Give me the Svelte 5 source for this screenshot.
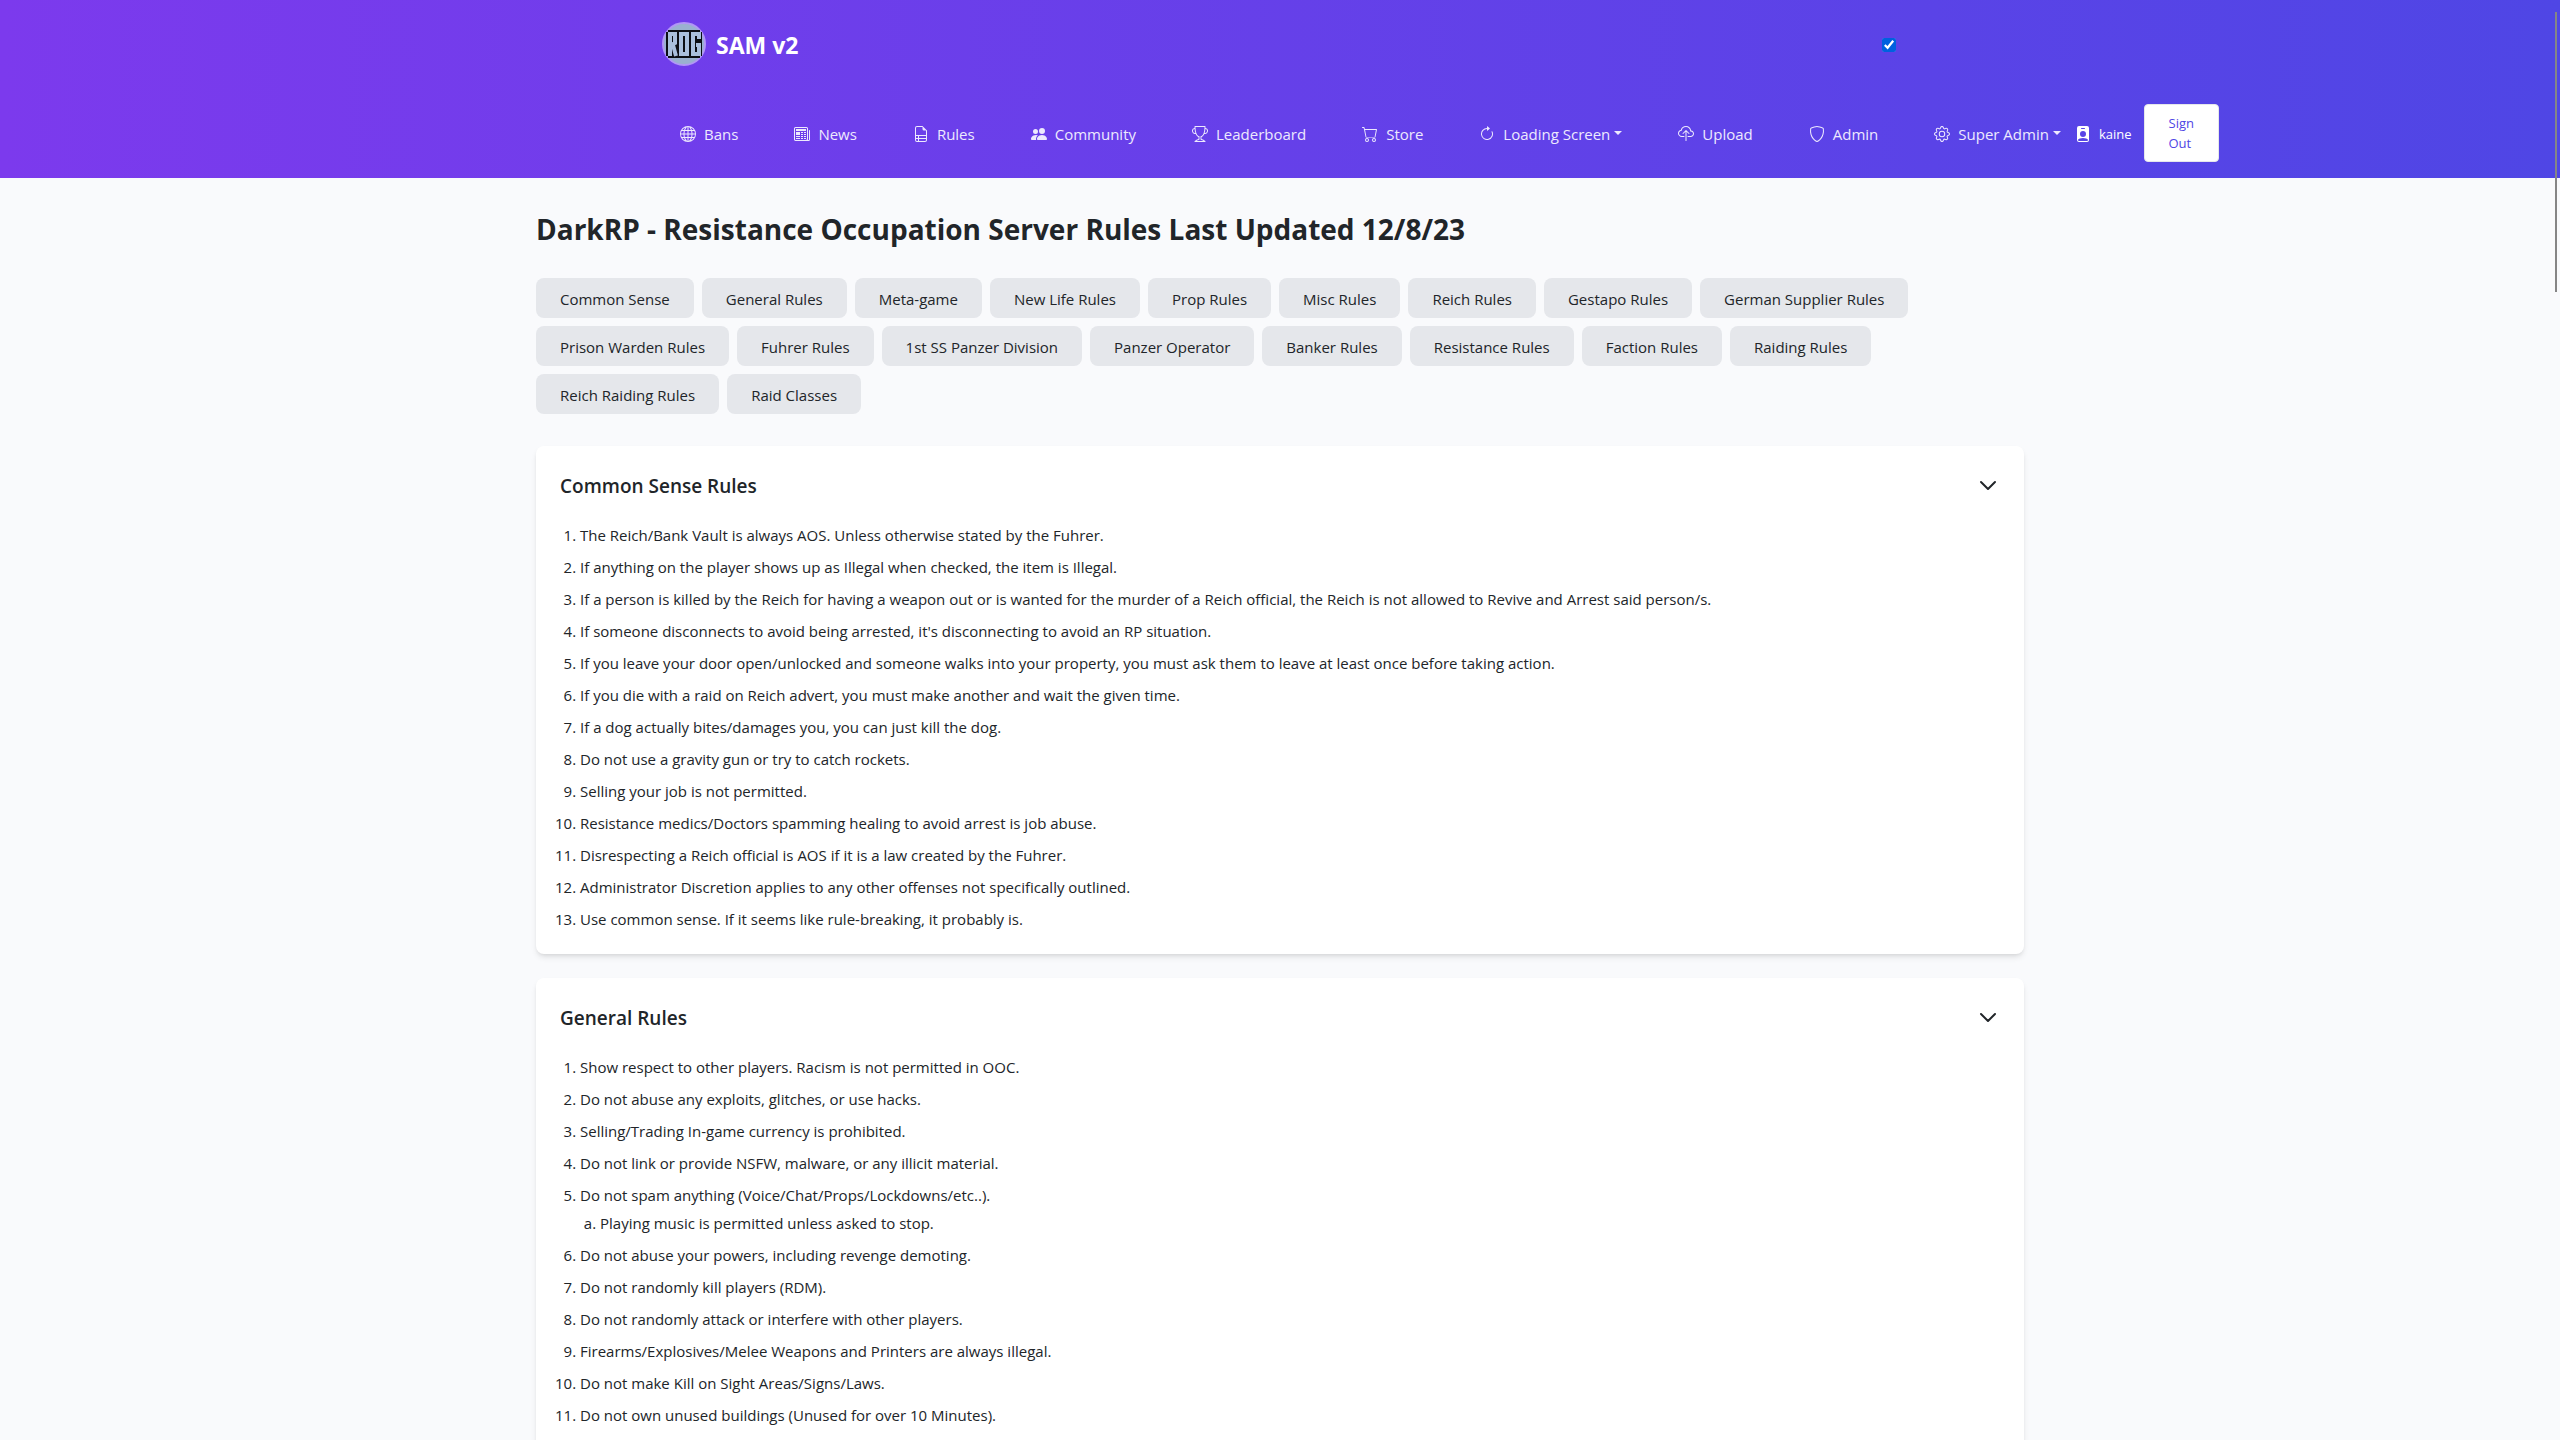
<script>
  let darkMode = $state(true);
  let open = $state([true, true]);

  const nav = [
    { label: 'Bans', icon: 'globe' },
    { label: 'News', icon: 'newspaper' },
    { label: 'Rules', icon: 'sheet' },
    { label: 'Community', icon: 'people' },
    { label: 'Leaderboard', icon: 'trophy' },
    { label: 'Store', icon: 'cart' },
    { label: 'Loading Screen', icon: 'arrow', menu: true },
    { label: 'Upload', icon: 'cloud' },
    { label: 'Admin', icon: 'shield' },
    { label: 'Super Admin', icon: 'gear', menu: true }
  ];

  const icons = {
    globe: ['M0 8a8 8 0 1 1 16 0A8 8 0 0 1 0 8zm7.5-6.923c-.67.204-1.335.82-1.887 1.855A7.97 7.97 0 0 0 5.145 4H7.5V1.077zM4.09 4a9.267 9.267 0 0 1 .64-1.539 6.7 6.7 0 0 1 .597-.933A7.025 7.025 0 0 0 2.255 4H4.09zm-.582 3.5c.03-.877.138-1.718.312-2.5H1.674a6.958 6.958 0 0 0-.656 2.5h2.49zM4.847 5a12.5 12.5 0 0 0-.338 2.5H7.5V5H4.847zM8.5 5v2.5h2.99a12.495 12.495 0 0 0-.337-2.5H8.5zM4.51 8.5a12.5 12.5 0 0 0 .337 2.5H7.5V8.5H4.51zm3.99 0V11h2.653c.187-.765.306-1.608.338-2.5H8.5zM5.145 12c.138.386.295.744.468 1.068.552 1.035 1.218 1.65 1.887 1.855V12H5.145zm.182 2.472a6.696 6.696 0 0 1-.597-.933A9.268 9.268 0 0 1 4.09 12H2.255a7.024 7.024 0 0 0 3.072 2.472zM3.82 11a13.652 13.652 0 0 1-.312-2.5h-2.49c.062.89.291 1.733.656 2.5H3.82zm6.853 3.472A7.024 7.024 0 0 0 13.745 12H11.91a9.27 9.27 0 0 1-.64 1.539 6.688 6.688 0 0 1-.597.933zM8.5 12v2.923c.67-.204 1.335-.82 1.887-1.855.173-.324.33-.682.468-1.068H8.5zm3.68-1h2.146c.365-.767.594-1.61.656-2.5h-2.49a13.65 13.65 0 0 1-.312 2.5zm2.802-3.5a6.959 6.959 0 0 0-.656-2.5H12.18c.174.782.282 1.623.312 2.5h2.49zM11.27 2.461c.247.464.462.98.64 1.539h1.835a7.024 7.024 0 0 0-3.072-2.472c.218.284.418.598.597.933zM10.855 4a7.966 7.966 0 0 0-.468-1.068C9.835 1.897 9.17 1.282 8.5 1.077V4h2.355z'],
    newspaper: ['M0 2.5A1.5 1.5 0 0 1 1.5 1h11A1.5 1.5 0 0 1 14 2.5v10.528c0 .3-.05.654-.238.972h.738a.5.5 0 0 0 .5-.5v-9a.5.5 0 0 1 1 0v9a1.5 1.5 0 0 1-1.5 1.5H1.497A1.497 1.497 0 0 1 0 13.5v-11zM12 14c.37 0 .654-.211.853-.441.092-.106.147-.279.147-.531V2.5a.5.5 0 0 0-.5-.5h-11a.5.5 0 0 0-.5.5v11c0 .278.223.5.497.5H12z', 'M2 3h10v2H2V3zm0 3h4v3H2V6zm0 4h4v1H2v-1zm0 2h4v1H2v-1zm5-6h2v1H7V6zm3 0h2v1h-2V6zM7 8h2v1H7V8zm3 0h2v1h-2V8zm-3 2h2v1H7v-1zm3 0h2v1h-2v-1zm-3 2h2v1H7v-1zm3 0h2v1h-2v-1z'],
    sheet: ['M14 14V4.5L9.5 0H4a2 2 0 0 0-2 2v12a2 2 0 0 0 2 2h8a2 2 0 0 0 2-2zM9.5 3A1.500 1.500 0 0 0 11 4.500h2V9H3V2a1 1 0 0 1 1-1h5.500v2zM3 12v-2h2v2H3zm0 1h2v2H4a1 1 0 0 1-1-1v-1zm3 2v-2h7v1a1 1 0 0 1-1 1H6zm7-3H6v-2h7v2z'],
    people: ['M7 14s-1 0-1-1 1-4 5-4 5 3 5 4-1 1-1 1H7zm4-6a3 3 0 1 0 0-6 3 3 0 0 0 0 6zm-5.784 6A2.238 2.238 0 0 1 5 13c0-1.355.68-2.750 1.936-3.720A6.325 6.325 0 0 0 5 9c-4 0-5 3-5 4s1 1 1 1h4.216zM4.500 8a2.500 2.500 0 1 0 0-5 2.500 2.500 0 0 0 0 5z'],
    trophy: ['M2.500.5A.5.5 0 0 1 3 0h10a.5.5 0 0 1 .5.5c0 .538-.012 1.050-.034 1.536a3 3 0 1 1-1.133 5.890c-.790 1.865-1.878 2.777-2.833 3.011v2.173l1.425.356c.194.048.377.135.537.255L13.300 15.100a.5.5 0 0 1-.3.900H3a.5.5 0 0 1-.3-.900l1.838-1.379c.160-.120.343-.207.537-.255L6.500 13.110v-2.173c-.955-.234-2.043-1.146-2.833-3.012a3 3 0 1 1-1.132-5.890A33.076 33.076 0 0 1 2.500.5zm.099 2.540a2 2 0 0 0 .720 3.935c-.333-1.050-.588-2.346-.720-3.935zm10.083 3.935a2 2 0 0 0 .720-3.935c-.133 1.590-.388 2.885-.720 3.935zM3.504 1c.007.517.026 1.006.056 1.469.130 2.028.457 3.546.870 4.667C5.294 9.480 6.484 10 7 10a.5.5 0 0 1 .5.5v2.610a1 1 0 0 1-.757.970l-1.426.356a.5.5 0 0 0-.179.085L4.500 15h7l-.638-.479a.501.501 0 0 0-.180-.085l-1.425-.356a1 1 0 0 1-.757-.970V10.500A.5.5 0 0 1 9 10c.516 0 1.706-.520 2.570-2.864.413-1.120.740-2.640.870-4.667.030-.463.049-.952.056-1.469H3.504z'],
    cart: ['M0 1.500A.5.5 0 0 1 .5 1H2a.5.5 0 0 1 .485.379L2.890 3H14.500a.5.5 0 0 1 .490.598l-1.500 7.500A.5.5 0 0 1 13 11.500H4a.5.5 0 0 1-.491-.408L2.010 3.607 1.610 2H.5a.5.5 0 0 1-.5-.5zM3.102 4l1.313 7h8.170l1.313-7H3.102zM5 12a2 2 0 1 0 0 4 2 2 0 0 0 0-4zm7 0a2 2 0 1 0 0 4 2 2 0 0 0 0-4zm-7 1a1 1 0 1 1 0 2 1 1 0 0 1 0-2zm7 0a1 1 0 1 1 0 2 1 1 0 0 1 0-2z'],
    arrow: ['M8 3a5 5 0 1 0 4.546 2.914.5.5 0 0 1 .908-.417A6 6 0 1 1 8 2v1z', 'M8 4.466V.534a.250.250 0 0 1 .410-.192l2.360 1.966c.120.100.120.284 0 .384L8.410 4.658A.250.250 0 0 1 8 4.466z'],
    cloud: ['M4.406 1.342A5.530 5.530 0 0 1 8 0c2.690 0 4.923 2 5.166 4.579C14.758 4.804 16 6.137 16 7.773 16 9.569 14.502 11 12.687 11H10a.5.5 0 0 1 0-1h2.688C13.979 10 15 8.988 15 7.773c0-1.216-1.020-2.228-2.313-2.228h-.5v-.5C12.188 2.825 10.328 1 8 1a4.530 4.530 0 0 0-2.941 1.100c-.757.652-1.153 1.438-1.153 2.055v.448l-.445.049C2.064 4.805 1 5.952 1 7.318 1 8.785 2.230 10 3.781 10H6a.5.5 0 0 1 0 1H3.781C1.708 11 0 9.366 0 7.318c0-1.763 1.266-3.223 2.942-3.593.143-.863.698-1.723 1.464-2.383z', 'M7.646 4.146a.5.5 0 0 1 .708 0l3 3a.5.5 0 0 1-.708.708L8.500 5.707V14.500a.5.5 0 0 1-1 0V5.707L5.354 7.854a.5.5 0 1 1-.708-.708l3-3z'],
    shield: ['M5.338 1.590a61.440 61.440 0 0 0-2.837.856.481.481 0 0 0-.328.390c-.554 4.157.726 7.190 2.253 9.188a10.725 10.725 0 0 0 2.287 2.233c.346.244.652.420.893.533.120.057.218.095.293.118a.550.550 0 0 0 .101.025.615.615 0 0 0 .100-.025c.076-.023.174-.061.294-.118.240-.113.547-.290.893-.533a10.726 10.726 0 0 0 2.287-2.233c1.527-1.997 2.807-5.031 2.253-9.188a.480.480 0 0 0-.328-.390c-.651-.213-1.750-.560-2.837-.855C9.552 1.290 8.531 1.067 8 1.067c-.530 0-1.552.223-2.662.524zM5.072.560C6.157.265 7.310 0 8 0s1.843.265 2.928.560c1.110.300 2.229.655 2.887.870a1.540 1.540 0 0 1 1.044 1.262c.596 4.477-.787 7.795-2.465 9.990a11.775 11.775 0 0 1-2.517 2.453 7.159 7.159 0 0 1-1.048.625c-.280.132-.581.240-.829.240s-.548-.108-.829-.240a7.158 7.158 0 0 1-1.048-.625 11.777 11.777 0 0 1-2.517-2.453C1.928 10.487.545 7.169 1.141 2.692A1.540 1.540 0 0 1 2.185 1.430 62.456 62.456 0 0 1 5.072.560z'],
    gear: ['M8 4.754a3.246 3.246 0 1 0 0 6.492 3.246 3.246 0 0 0 0-6.492zM5.754 8a2.246 2.246 0 1 1 4.492 0 2.246 2.246 0 0 1-4.492 0z', 'M9.796 1.343c-.527-1.790-3.065-1.790-3.592 0l-.094.319a.873.873 0 0 1-1.255.520l-.292-.160c-1.640-.892-3.433.902-2.540 2.541l.159.292a.873.873 0 0 1-.520 1.255l-.319.094c-1.790.527-1.790 3.065 0 3.592l.319.094a.873.873 0 0 1 .520 1.255l-.160.292c-.892 1.640.901 3.434 2.541 2.540l.292-.159a.873.873 0 0 1 1.255.520l.094.319c.527 1.790 3.065 1.790 3.592 0l.094-.319a.873.873 0 0 1 1.255-.520l.292.160c1.640.893 3.434-.902 2.540-2.541l-.159-.292a.873.873 0 0 1 .520-1.255l.319-.094c1.790-.527 1.790-3.065 0-3.592l-.319-.094a.873.873 0 0 1-.520-1.255l.160-.292c.893-1.640-.902-3.433-2.541-2.540l-.292.159a.873.873 0 0 1-1.255-.520l-.094-.319zm-2.633.283c.246-.835 1.428-.835 1.674 0l.094.319a1.873 1.873 0 0 0 2.693 1.115l.291-.160c.764-.415 1.600.420 1.184 1.185l-.159.292a1.873 1.873 0 0 0 1.116 2.692l.318.094c.835.246.835 1.428 0 1.674l-.319.094a1.873 1.873 0 0 0-1.115 2.693l.160.291c.415.764-.420 1.600-1.185 1.184l-.291-.159a1.873 1.873 0 0 0-2.693 1.116l-.094.318c-.246.835-1.428.835-1.674 0l-.094-.319a1.873 1.873 0 0 0-2.692-1.115l-.292.160c-.764.415-1.600-.420-1.184-1.185l.159-.291A1.873 1.873 0 0 0 1.945 8.930l-.319-.094c-.835-.246-.835-1.428 0-1.674l.319-.094A1.873 1.873 0 0 0 3.060 4.377l-.160-.292c-.415-.764.420-1.600 1.185-1.184l.292.159a1.873 1.873 0 0 0 2.692-1.115l.094-.319z'],
    badge: ['M2 2a2 2 0 0 1 2-2h8a2 2 0 0 1 2 2v12a2 2 0 0 1-2 2H4a2 2 0 0 1-2-2V2zm4.500 0a.5.5 0 0 0 0 1h3a.5.5 0 0 0 0-1h-3zM8 11a3 3 0 1 0 0-6 3 3 0 0 0 0 6zm5 2.755C12.146 12.825 10.623 12 8 12s-4.146.826-5 1.755V14a1 1 0 0 0 1 1h8a1 1 0 0 0 1-1v-.245z']
  };

  const pills = [
    'Common Sense', 'General Rules', 'Meta-game', 'New Life Rules', 'Prop Rules', 'Misc Rules',
    'Reich Rules', 'Gestapo Rules', 'German Supplier Rules', 'Prison Warden Rules', 'Fuhrer Rules',
    '1st SS Panzer Division', 'Panzer Operator', 'Banker Rules', 'Resistance Rules', 'Faction Rules',
    'Raiding Rules', 'Reich Raiding Rules', 'Raid Classes'
  ];

  const sections = [
    {
      title: 'Common Sense Rules',
      rules: [
        { text: 'The Reich/Bank Vault is always AOS. Unless otherwise stated by the Fuhrer.' },
        { text: 'If anything on the player shows up as Illegal when checked, the item is Illegal.' },
        { text: 'If a person is killed by the Reich for having a weapon out or is wanted for the murder of a Reich official, the Reich is not allowed to Revive and Arrest said person/s.' },
        { text: "If someone disconnects to avoid being arrested, it's disconnecting to avoid an RP situation." },
        { text: 'If you leave your door open/unlocked and someone walks into your property, you must ask them to leave at least once before taking action.' },
        { text: 'If you die with a raid on Reich advert, you must make another and wait the given time.' },
        { text: 'If a dog actually bites/damages you, you can just kill the dog.' },
        { text: 'Do not use a gravity gun or try to catch rockets.' },
        { text: 'Selling your job is not permitted.' },
        { text: 'Resistance medics/Doctors spamming healing to avoid arrest is job abuse.' },
        { text: 'Disrespecting a Reich official is AOS if it is a law created by the Fuhrer.' },
        { text: 'Administrator Discretion applies to any other offenses not specifically outlined.' },
        { text: 'Use common sense. If it seems like rule-breaking, it probably is.' }
      ]
    },
    {
      title: 'General Rules',
      rules: [
        { text: 'Show respect to other players. Racism is not permitted in OOC.' },
        { text: 'Do not abuse any exploits, glitches, or use hacks.' },
        { text: 'Selling/Trading In-game currency is prohibited.' },
        { text: 'Do not link or provide NSFW, malware, or any illicit material.' },
        { text: 'Do not spam anything (Voice/Chat/Props/Lockdowns/etc..).', sub: ['Playing music is permitted unless asked to stop.'] },
        { text: 'Do not abuse your powers, including revenge demoting.' },
        { text: 'Do not randomly kill players (RDM).' },
        { text: 'Do not randomly attack or interfere with other players.' },
        { text: 'Firearms/Explosives/Melee Weapons and Printers are always illegal.' },
        { text: 'Do not make Kill on Sight Areas/Signs/Laws.' },
        { text: 'Do not own unused buildings (Unused for over 10 Minutes).' }
      ]
    }
  ];
</script>

{#snippet icon(name)}
  <svg class="icon" viewBox="0 0 16 16" aria-hidden="true">
    {#each icons[name] as d}<path {d} />{/each}
  </svg>
{/snippet}

<div class="page">
  <header>
    <div class="top">
      <a class="brand" href="#home">
        <svg class="logo" viewBox="0 0 44 44" aria-hidden="true">
          <circle cx="22" cy="22" r="21" fill="#9ab1cf" stroke="#b197f5" stroke-width="2" />
          <path d="M6 8H38V10H40V34H38V36H6V34H4V10H6Z" fill="#0b0e14" />
          <g fill="none" stroke="#a9bfdc" stroke-width="4">
            <path d="M8 34V12H13V21L9 23M11 23L14 34" />
            <rect x="19" y="12" width="6" height="20" />
            <path d="M37 17V12H31V32H37V23H34" />
          </g>
        </svg>
        <span>SAM v2</span>
      </a>
      <input type="checkbox" aria-label="Theme" bind:checked={darkMode} />
    </div>
    <div class="bar">
      <nav>
        {#each nav as item}
          <a href="#nav" class:menu={item.menu}>{@render icon(item.icon)}<span>{item.label}</span></a>
        {/each}
      </nav>
      <div class="account">
        <a class="user" href="#profile">{@render icon('badge')}<span>kaine</span></a>
        <button class="signout" type="button">Sign<br />Out</button>
      </div>
    </div>
  </header>

  <main>
    <h1>DarkRP - Resistance Occupation Server Rules Last Updated 12/8/23</h1>
    <div class="pills">
      {#each pills as pill}<a href="#rules">{pill}</a>{/each}
    </div>
    {#each sections as section, i}
      <section>
        <button class="heading" type="button" aria-expanded={open[i]} onclick={() => (open[i] = !open[i])}>
          <span>{section.title}</span>
          <svg class="chevron" viewBox="0 0 24 24" aria-hidden="true"><path d="M19 9l-7 7-7-7" /></svg>
        </button>
        {#if open[i]}
          <ol>
            {#each section.rules as rule}
              <li>
                {rule.text}
                {#if rule.sub}
                  <ol class="sub">{#each rule.sub as s}<li>{s}</li>{/each}</ol>
                {/if}
              </li>
            {/each}
          </ol>
        {/if}
      </section>
    {/each}
  </main>
  <div class="scrollbar" aria-hidden="true"></div>
</div>

<style>
  :global(body) {
    margin: 0;
    background: #f9fafc;
  }
  .page {
    height: 100vh;
    overflow: hidden;
    font: 15px/24px 'Segoe UI', 'Open Sans', 'Noto Sans', sans-serif;
    color: #212529;
  }
  a {
    color: inherit;
    text-decoration: none;
  }
  button {
    font: inherit;
    color: inherit;
    border: 0;
    cursor: pointer;
  }
  header {
    background: linear-gradient(to right, #7c3aed, #4f46e5);
    color: #fff;
  }
  .top,
  .bar {
    display: flex;
    align-items: center;
    max-width: 1236px;
    margin: 0 auto;
  }
  .top {
    justify-content: space-between;
    padding: 22px 0;
  }
  .brand {
    display: flex;
    align-items: center;
    gap: 10px;
    font-size: 23px;
    font-weight: 700;
  }
  .brand span {
    padding-top: 2px;
  }
  .logo {
    width: 44px;
    height: 44px;
  }
  input {
    width: 14px;
    height: 14px;
    margin: 2px 2px 0 0;
    accent-color: #0060df;
  }
  .bar {
    gap: 14px;
    box-sizing: border-box;
    padding: 16px 0 16px 18px;
  }
  nav {
    display: flex;
    flex: none;
    gap: 56px;
    color: #ede9fe;
  }
  nav a,
  .user {
    display: flex;
    align-items: center;
    gap: 8px;
    padding-top: 2px;
    white-space: nowrap;
  }
  .icon {
    width: 16px;
    height: 16px;
    fill: currentColor;
  }
  .menu::after {
    content: '';
    margin-left: -4px;
    margin-bottom: 2px;
    border: 4px solid transparent;
    border-top-color: currentColor;
    border-bottom: 0;
  }
  .account {
    display: flex;
    flex: none;
    align-items: center;
    gap: 12px;
    font-size: 13px;
    line-height: 20px;
  }
  .signout {
    padding: 8px 24px;
    border: 1px solid #e5e7eb;
    border-radius: 4px;
    background: #fff;
    color: #4f46e5;
    text-align: left;
  }
  main {
    max-width: 1488px;
    margin: 0 auto;
    padding: 33px 24px;
  }
  h1 {
    margin: 0 0 31px;
    font-size: 28px;
    line-height: 36px;
    font-weight: 700;
  }
  .pills {
    display: flex;
    flex-wrap: wrap;
    gap: 8px;
    margin-bottom: 32px;
  }
  .pills a {
    padding: 9px 24px 7px;
    border-radius: 8px;
    background: #e5e7eb;
  }
  section {
    margin-bottom: 24px;
    padding: 24px 24px 23px;
    border-radius: 8px;
    background: #fff;
    box-shadow: 0 4px 6px -1px rgb(0 0 0 / 0.1), 0 2px 4px -2px rgb(0 0 0 / 0.1);
  }
  .heading {
    display: flex;
    align-items: center;
    justify-content: space-between;
    width: 100%;
    padding: 0;
    background: none;
    font-size: 19px;
    line-height: 28px;
    font-weight: 600;
  }
  .heading span {
    padding-top: 2px;
  }
  .chevron {
    width: 24px;
    height: 24px;
    fill: none;
    stroke: currentColor;
    stroke-width: 2;
    stroke-linecap: round;
    stroke-linejoin: round;
  }
  ol {
    display: flex;
    flex-direction: column;
    gap: 8px;
    margin: 23px 0 0;
    padding-left: 20px;
  }
  .sub {
    margin-top: 4px;
    list-style: lower-alpha;
  }
  .scrollbar {
    position: absolute;
    top: 12px;
    right: 3px;
    width: 2px;
    height: 280px;
    background: #858585;
  }
</style>
